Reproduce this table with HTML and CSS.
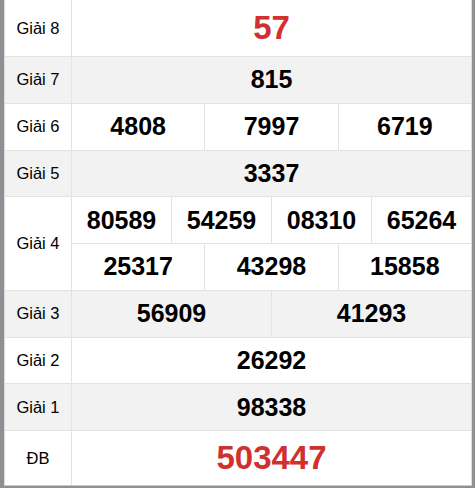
FILE: index.html
```html
<!DOCTYPE html>
<html lang="vi">
<head>
<meta charset="utf-8">
<link rel="stylesheet" href="styles.css">
</head>
<body>
<div class="board">
  <div class="row top">
    <div class="label">Giải 8</div>
    <div class="vals"><div class="v red big">57</div></div>
  </div>
  <div class="row alt">
    <div class="label">Giải 7</div>
    <div class="vals"><div class="v">815</div></div>
  </div>
  <div class="row">
    <div class="label">Giải 6</div>
    <div class="vals"><div class="v">4808</div><div class="v">7997</div><div class="v">6719</div></div>
  </div>
  <div class="row alt">
    <div class="label">Giải 5</div>
    <div class="vals"><div class="v">3337</div></div>
  </div>
  <div class="row">
    <div class="label">Giải 4</div>
    <div class="stack">
      <div class="vals"><div class="v">80589</div><div class="v">54259</div><div class="v">08310</div><div class="v">65264</div></div>
      <div class="vals sub"><div class="v">25317</div><div class="v">43298</div><div class="v">15858</div></div>
    </div>
  </div>
  <div class="row alt">
    <div class="label">Giải 3</div>
    <div class="vals"><div class="v">56909</div><div class="v">41293</div></div>
  </div>
  <div class="row">
    <div class="label">Giải 2</div>
    <div class="vals"><div class="v">26292</div></div>
  </div>
  <div class="row alt">
    <div class="label">Giải 1</div>
    <div class="vals"><div class="v">98338</div></div>
  </div>
  <div class="row db">
    <div class="label">ĐB</div>
    <div class="vals"><div class="v red big">503447</div></div>
  </div>
</div>
</body>
</html>
```
FILE: styles.css
```css
html, body {
  margin: 0;
  padding: 0;
}
body {
  background: #8d9095;
  width: 475px;
  height: 488px;
  overflow: hidden;
  padding-left: 4px;
  box-sizing: border-box;
  font-family: "Liberation Sans", Arial, sans-serif;
}
.board {
  width: 468px;
  box-sizing: border-box;
  background: #fff;
  border-left: 1px solid #dedcd9;
  border-right: 1px solid #dedcd9;
  border-bottom: 1px solid #d7c6b4;
}
.row {
  display: grid;
  grid-template-columns: 67px 1fr;
  border-top: 1px solid #e6e3df;
}
.row.top {
  border-top: none;
}
.row.alt {
  background: #f2f2f2;
}
.label {
  display: flex;
  align-items: center;
  justify-content: center;
  font-size: 16.5px;
  color: #000;
  border-right: 1px solid #e6e3df;
}
.stack {
  display: flex;
  flex-direction: column;
}
.vals {
  display: flex;
  height: 45.75px;
}
.vals.sub {
  border-top: 1px solid #e6e3df;
}
.row.top .vals {
  height: 56px;
}
.row.db .vals {
  height: 54px;
}
.v {
  flex: 1 1 0;
  display: flex;
  align-items: center;
  justify-content: center;
  font-weight: bold;
  font-size: 25px;
  color: #000;
}
.v + .v {
  border-left: 1px solid #e6e3df;
}
.v.big {
  font-size: 33px;
}
.v.red {
  color: #d0312f;
}
```
